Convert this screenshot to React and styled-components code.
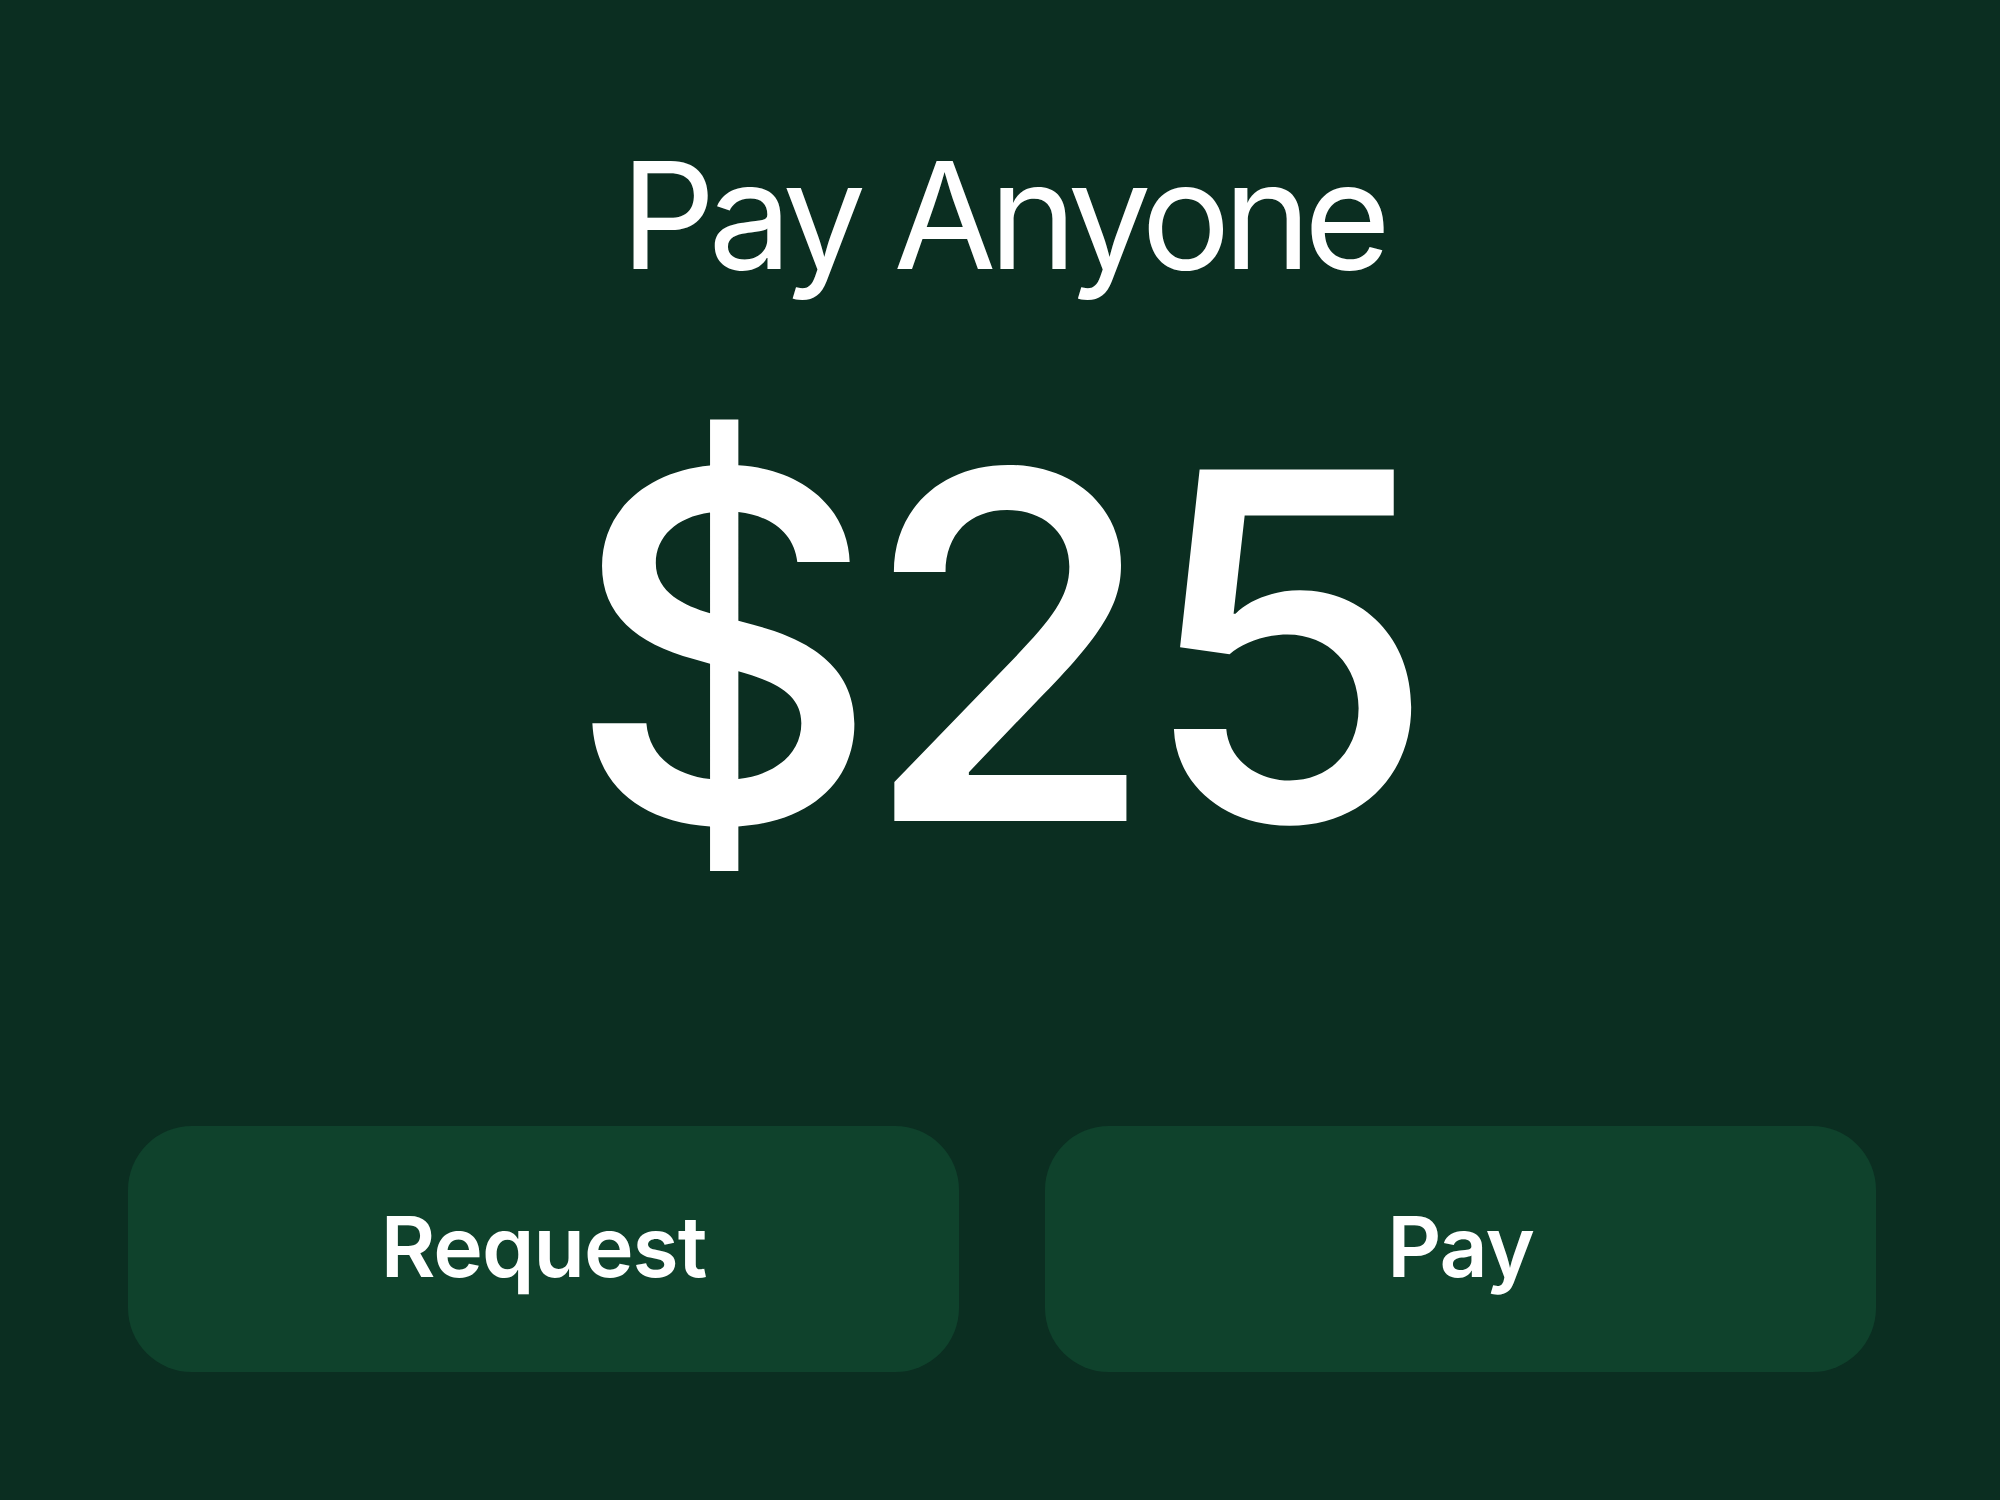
import React from "react";
import styled, { createGlobalStyle } from "styled-components";

const GlobalStyle = createGlobalStyle`
  html, body {
    margin: 0;
    padding: 0;
    background: #0b2e21;
  }
`;

const Screen = styled.div`
  width: 2000px;
  height: 1500px;
  background: #0b2e21;
  color: #ffffff;
  font-family: Inter, "Liberation Sans", sans-serif;
  display: flex;
  flex-direction: column;
  align-items: center;
  box-sizing: border-box;
  padding: 141px 124px 0 128px;
`;

const Title = styled.h1`
  margin: 0;
  font-size: 149px;
  font-weight: 400;
  line-height: 1;
  letter-spacing: -7.3px;
`;

const Amount = styled.div`
  margin: 114px 0 0 -18px;
  font-size: 483px;
  font-weight: 500;
  line-height: 1;
  letter-spacing: -19px;
`;

const ButtonRow = styled.div`
  margin-top: auto;
  margin-bottom: 128px;
  width: 100%;
  display: grid;
  grid-template-columns: 1fr 1fr;
  gap: 86px;
`;

const ActionButton = styled.button`
  height: 246px;
  border: none;
  border-radius: 64px;
  background: #0f422c;
  color: #ffffff;
  font-family: Inter, "Liberation Sans", sans-serif;
  font-size: 84px;
  font-weight: 600;
  letter-spacing: -1px;
  display: flex;
  align-items: center;
  justify-content: center;
  padding: 0 0 5px;
  cursor: pointer;
`;

export default function App() {
  return (
    <>
      <GlobalStyle />
      <Screen>
        <Title>Pay Anyone</Title>
        <Amount>$25</Amount>
        <ButtonRow>
          <ActionButton>Request</ActionButton>
          <ActionButton>Pay</ActionButton>
        </ButtonRow>
      </Screen>
    </>
  );
}
